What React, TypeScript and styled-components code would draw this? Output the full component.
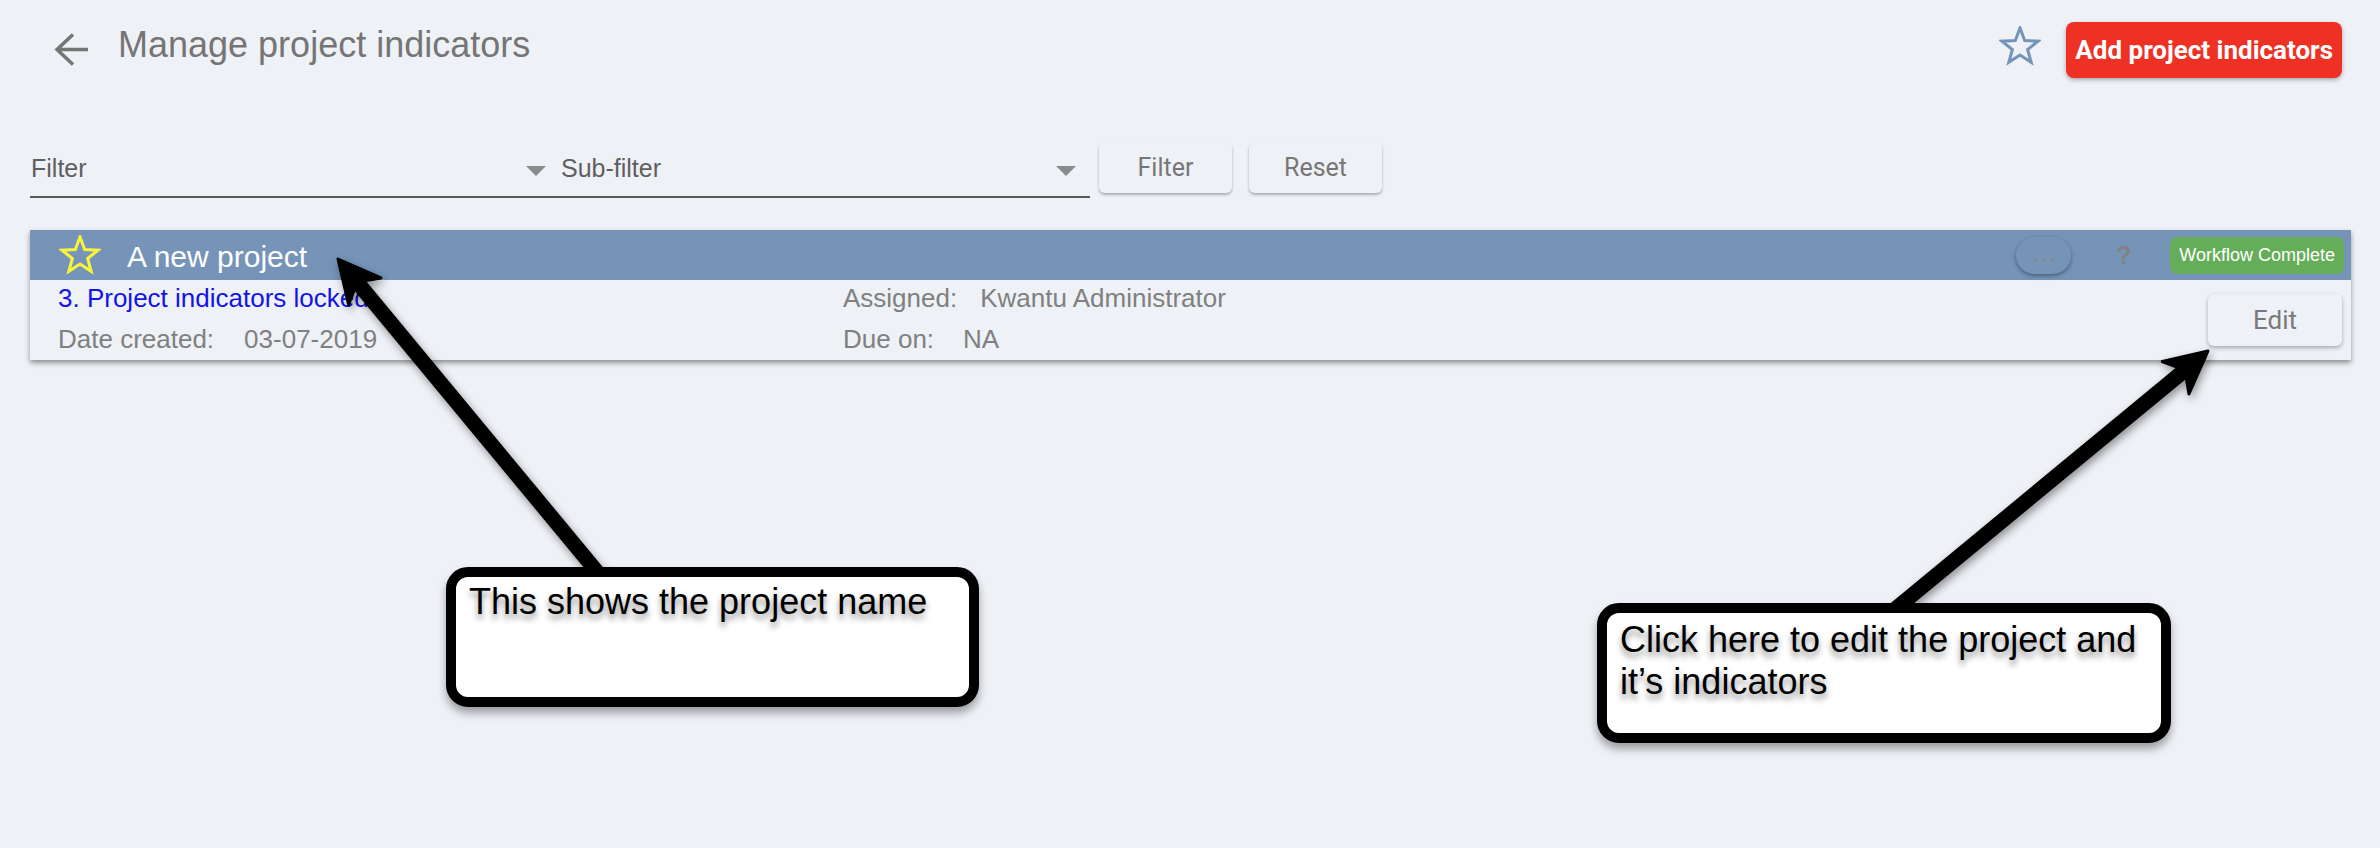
import * as React from 'react';
import styled, { createGlobalStyle } from 'styled-components';

const GlobalStyle = createGlobalStyle`
    html, body {
        margin: 0;
        padding: 0;
        background: #eef1f6;
    }
    body {
        font-family: "Liberation Sans", Arial, sans-serif;
    }
`;

const Page = styled.div`
    position: relative;
    width: 2380px;
    min-height: 848px;
    box-sizing: border-box;
    padding: 22px 29px 0 30px;
    overflow: hidden;
`;

const TopBar = styled.header`
    display: flex;
    align-items: flex-start;
    height: 56px;
    padding: 0 9px 0 24px;
`;

const BackButton = styled.button`
    margin-top: 11px;
    padding: 0;
    width: 34px;
    height: 33px;
    border: none;
    background: none;
    display: flex;
`;

const PageTitle = styled.h1`
    flex: 1;
    margin: 3px 0 0 30px;
    font-size: 36px;
    line-height: 40px;
    font-weight: 400;
    color: #757575;
`;

const FavButton = styled.button`
    margin: 4px 25px 0 0;
    padding: 0;
    border: none;
    background: none;
    display: flex;
`;

const AddButton = styled.button`
    height: 56px;
    padding: 0 9px;
    border: none;
    border-radius: 8px;
    background: #ee3124;
    color: #fff;
    font-family: Roboto, "Liberation Sans", sans-serif;
    font-weight: 700;
    font-size: 26px;
    box-shadow: 0 2px 4px rgba(0, 0, 0, 0.3);
`;

const FilterRow = styled.div`
    display: flex;
    align-items: flex-start;
    margin-top: 64px;
    height: 56px;
`;

type SelectProps = { $width: number; $padLeft: number; $padRight: number };
const SelectField = styled.div<SelectProps>`
    width: ${(p) => p.$width}px;
    height: 56px;
    box-sizing: border-box;
    display: flex;
    align-items: flex-end;
    padding: 0 ${(p) => p.$padRight}px 13px ${(p) => p.$padLeft}px;
    border-bottom: 2px solid #585858;
`;

const SelectLabel = styled.span`
    flex: 1;
    font-size: 25px;
    line-height: 30px;
    color: #5f5f5f;
`;

const Caret = styled.span`
    width: 0;
    height: 0;
    margin-bottom: 7px;
    border-left: 10px solid transparent;
    border-right: 10px solid transparent;
    border-top: 10px solid #8a8a8a;
`;

type PlainButtonProps = { $ml: number };
const PlainButton = styled.button<PlainButtonProps>`
    width: 133px;
    height: 51px;
    margin-left: ${(p) => p.$ml}px;
    border: none;
    border-radius: 6px;
    background: #eef1f6;
    color: #777;
    font-family: Roboto, "Liberation Sans", sans-serif;
    font-size: 25px;
    box-shadow: 0 2px 3px rgba(0, 0, 0, 0.28);
`;

const Card = styled.section`
    margin-top: 32px;
    background: #eef1f6;
    box-shadow: 0 3px 5px rgba(0, 0, 0, 0.4);
`;

const CardHeader = styled.div`
    height: 50px;
    display: flex;
    align-items: center;
    padding: 0 7px 0 29px;
    background: #7594b8;
`;

const ProjectName = styled.div`
    flex: 1;
    margin: 3px 0 0 26px;
    font-size: 30px;
    line-height: 30px;
    color: #fff;
`;

const MorePill = styled.div`
    flex: none;
    display: flex;
    align-items: center;
    justify-content: center;
    gap: 5px;
    width: 55px;
    height: 37px;
    padding-top: 10px;
    box-sizing: border-box;
    border-radius: 19px;
    background: #7594b8;
    box-shadow: 0 2px 4px rgba(0, 0, 0, 0.35);
`;

const Dot = styled.span`
    width: 4px;
    height: 4px;
    border-radius: 50%;
    background: #848a94;
`;

const HelpMark = styled.div`
    margin-left: 45px;
    width: 13px;
    font-size: 25px;
    font-weight: 700;
    color: #828282;
`;

const StatusBadge = styled.div`
    margin-left: 41px;
    height: 37px;
    padding: 0 9px;
    border-radius: 7px;
    background: #66ad5a;
    color: #fff;
    font-size: 18px;
    line-height: 37px;
`;

const CardBody = styled.div`
    height: 80px;
    display: flex;
    align-items: flex-start;
    padding: 0 9px 0 28px;
`;

type InfoColumnProps = { $width?: number };
const InfoColumn = styled.div<InfoColumnProps>`
    ${(p) => (p.$width ? `width: ${p.$width}px;` : 'flex: 1;')}
    margin-top: -2px;
    font-size: 26px;
    line-height: 41px;
    color: #808080;
`;

const StatusLink = styled.div`
    color: #1414e8;
`;

type FieldLabelProps = { $gap: number };
const FieldLabel = styled.span<FieldLabelProps>`
    margin-right: ${(p) => p.$gap}px;
`;

const EditButton = styled.button`
    width: 134px;
    height: 52px;
    margin-top: 14px;
    border: none;
    border-radius: 6px;
    background: #eef1f6;
    color: #7a7a7a;
    font-family: Roboto, "Liberation Sans", sans-serif;
    font-size: 26px;
    box-shadow: 0 2px 4px rgba(0, 0, 0, 0.3);
`;

const Annotations = styled.svg`
    position: absolute;
    top: 0;
    left: 0;
    pointer-events: none;
    filter: drop-shadow(2px 4px 4px rgba(0, 0, 0, 0.4));
`;

type CalloutProps = { $left: number; $top: number; $width: number; $padTop: number };
const Callout = styled.div<CalloutProps>`
    position: absolute;
    left: ${(p) => p.$left}px;
    top: ${(p) => p.$top}px;
    width: ${(p) => p.$width}px;
    height: 140px;
    box-sizing: border-box;
    padding: ${(p) => p.$padTop}px 13px 0;
    border: 10px solid #000;
    border-radius: 22px;
    background: #fff;
    box-shadow: 0 6px 8px rgba(0, 0, 0, 0.35);
    font-size: 36px;
    line-height: 42px;
    color: #000;
    text-shadow: 0 5px 6px rgba(0, 0, 0, 0.45);
`;

function starPoints(cx: number, cy: number, outer: number, inner: number): string {
    const pts: string[] = [];
    for (let i = 0; i < 10; i++) {
        const r = i % 2 === 0 ? outer : inner;
        const a = (Math.PI / 5) * i - Math.PI / 2;
        pts.push(`${(cx + r * Math.cos(a)).toFixed(2)},${(cy + r * Math.sin(a)).toFixed(2)}`);
    }
    return pts.join(' ');
}

function StarIcon({ color }: { color: string }) {
    return (
        <svg width="42" height="40" viewBox="0 0 42 40">
            <polygon points={starPoints(21, 21, 19, 8)} fill="none" stroke={color} strokeWidth="3" strokeLinejoin="miter" />
        </svg>
    );
}

function BackArrow() {
    return (
        <svg width="34" height="33" viewBox="0 0 34 33">
            <path d="M19 1.5 L3 16.5 L19 31.5 M3 16.5 H34" fill="none" stroke="#757575" strokeWidth="3.5" />
        </svg>
    );
}

type Pt = [number, number];

function Arrow({ tip, tail }: { tip: Pt; tail: Pt }) {
    const dx = tip[0] - tail[0];
    const dy = tip[1] - tail[1];
    const len = Math.hypot(dx, dy);
    const ux = dx / len;
    const uy = dy / len;
    const nx = -uy;
    const ny = ux;
    const notch: Pt = [tip[0] - 30 * ux, tip[1] - 30 * uy];
    const base: Pt = [tip[0] - 42 * ux, tip[1] - 42 * uy];
    const w1: Pt = [base[0] + 21 * nx, base[1] + 21 * ny];
    const w2: Pt = [base[0] - 21 * nx, base[1] - 21 * ny];
    const pts = [tip, w1, notch, w2].map((p) => p.join(',')).join(' ');
    return (
        <g>
            <line x1={tail[0]} y1={tail[1]} x2={notch[0]} y2={notch[1]} stroke="#000" strokeWidth="15" />
            <polygon points={pts} fill="#000" stroke="#000" strokeWidth="3" strokeLinejoin="round" />
        </g>
    );
}

export default function App(): React.ReactElement {
    return (
        <>
            <GlobalStyle />
            <Page>
                <TopBar>
                    <BackButton aria-label="Back">
                        <BackArrow />
                    </BackButton>
                    <PageTitle>Manage project indicators</PageTitle>
                    <FavButton aria-label="Favourite">
                        <StarIcon color="#7594b9" />
                    </FavButton>
                    <AddButton>Add project indicators</AddButton>
                </TopBar>

                <FilterRow>
                    <SelectField $width={522} $padLeft={1} $padRight={6}>
                        <SelectLabel>Filter</SelectLabel>
                        <Caret />
                    </SelectField>
                    <SelectField $width={538} $padLeft={9} $padRight={14}>
                        <SelectLabel>Sub-filter</SelectLabel>
                        <Caret />
                    </SelectField>
                    <PlainButton $ml={9}>Filter</PlainButton>
                    <PlainButton $ml={17}>Reset</PlainButton>
                </FilterRow>

                <Card>
                    <CardHeader>
                        <StarIcon color="#f8f53c" />
                        <ProjectName>A new project</ProjectName>
                        <MorePill aria-label="More">
                            <Dot />
                            <Dot />
                            <Dot />
                        </MorePill>
                        <HelpMark>?</HelpMark>
                        <StatusBadge>Workflow Complete</StatusBadge>
                    </CardHeader>
                    <CardBody>
                        <InfoColumn $width={785}>
                            <StatusLink>3. Project indicators locked</StatusLink>
                            <div>
                                <FieldLabel $gap={30}>Date created:</FieldLabel>
                                03-07-2019
                            </div>
                        </InfoColumn>
                        <InfoColumn>
                            <div>
                                <FieldLabel $gap={23}>Assigned:</FieldLabel>
                                Kwantu Administrator
                            </div>
                            <div>
                                <FieldLabel $gap={29}>Due on:</FieldLabel>
                                NA
                            </div>
                        </InfoColumn>
                        <EditButton>Edit</EditButton>
                    </CardBody>
                </Card>

                <Annotations width="2380" height="848" viewBox="0 0 2380 848">
                    <Arrow tip={[338, 259]} tail={[603, 579]} />
                    <Arrow tip={[2208, 351]} tail={[1888, 615]} />
                </Annotations>

                <Callout $left={446} $top={567} $width={533} $padTop={4}>
                    This shows the project name
                </Callout>
                <Callout $left={1597} $top={603} $width={574} $padTop={6}>
                    Click here to edit the project and it’s indicators
                </Callout>
            </Page>
        </>
    );
}
